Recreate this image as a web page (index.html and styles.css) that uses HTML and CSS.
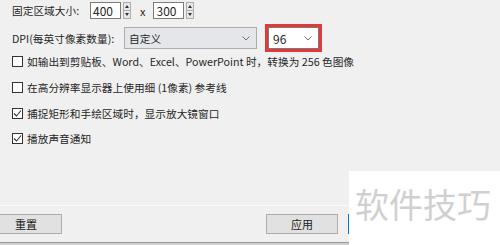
FILE: index.html
```html
<!DOCTYPE html>
<html lang="zh-CN">
<head>
  <meta charset="UTF-8" />
  <title>捕捉设置</title>
  <link rel="stylesheet" href="styles.css">
</head>
<body>
  <div class="panel">
    <div class="row size-row">
      <span class="label">固定区域大小:</span>
      <span class="num-input">400</span>
      <span class="spin"><span class="up"></span><span class="down"></span></span>
      <span class="times">x</span>
      <span class="num-input">300</span>
      <span class="spin"><span class="up"></span><span class="down"></span></span>
    </div>

    <div class="row dpi-row">
      <span class="label dpi-label">DPI(每英寸像素数量):</span>
      <div class="combo combo-mode">
        <span>自定义</span>
        <svg class="chev" width="8" height="5" viewBox="0 0 8 5"><polyline points="0.5,0.5 4,4 7.5,0.5" fill="none" stroke="#6d6d6d" stroke-width="1"/></svg>
      </div>
      <div class="mark">
        <div class="combo combo-dpi">
          <span>96</span>
          <svg class="chev" width="8" height="5" viewBox="0 0 8 5"><polyline points="0.5,0.5 4,4 7.5,0.5" fill="none" stroke="#6d6d6d" stroke-width="1"/></svg>
        </div>
      </div>
    </div>

    <label class="row check"><span class="box"></span>如输出到剪贴板、Word、Excel、PowerPoint 时，转换为 256 色图像</label>
    <label class="row check"><span class="box"></span>在高分辨率显示器上使用细 (1像素) 参考线</label>
    <label class="row check"><span class="box on"><svg width="9" height="9" viewBox="0 0 9 9"><polyline points="1,4.5 3.5,7 8,1.5" fill="none" stroke="#333" stroke-width="1.1"/></svg></span>捕捉矩形和手绘区域时，显示放大镜窗口</label>
    <label class="row check"><span class="box on"><svg width="9" height="9" viewBox="0 0 9 9"><polyline points="1,4.5 3.5,7 8,1.5" fill="none" stroke="#333" stroke-width="1.1"/></svg></span>播放声音通知</label>
  </div>

  <div class="footer">
    <div class="buttons">
      <button class="btn btn-reset">重置</button>
      <button class="btn btn-apply">应用</button>
      <button class="btn btn-cancel" aria-label="取消"></button>
    </div>
    <div class="edge"></div>
  </div>

  <div class="watermark">软件技巧</div>
</body>
</html>
```

FILE: styles.css
```css
body { margin: 0; width: 500px; height: 245px; overflow: hidden; position: relative; background: #f0f0f0; color: #262626; font-family: "Noto Sans CJK SC", "Liberation Sans", sans-serif; font-size: 10.7px; }

.panel { height: 205px; padding-left: 12px; box-sizing: border-box; }
.row { display: flex; align-items: center; }

.size-row { padding-top: 2px; height: 17px; }
.label { width: 78px; }
.num-input { width: 27px; height: 15px; border: 1px solid #7a7a7a; background: #fff; font-size: 12px; line-height: 15px; padding-left: 2px; box-sizing: content-box; }
.spin { display: flex; flex-direction: column; margin-left: 2px; width: 8px; height: 17px; border: 1px solid #adadad; background: #e8e8e8; box-sizing: border-box; }
.spin span { flex: 1; display: flex; align-items: center; justify-content: center; }
.spin .up { border-bottom: 1px solid #adadad; }
.spin .up::before { content: ""; border-left: 2px solid transparent; border-right: 2px solid transparent; border-bottom: 3px solid #333; }
.spin .down::before { content: ""; border-left: 2px solid transparent; border-right: 2px solid transparent; border-top: 3px solid #333; }
.times { margin: 0 8px 0 9px; font-size: 11px; }

.dpi-row { margin-top: 5px; margin-bottom: -3px; height: 28px; }
.dpi-label { width: 112px; }
.combo { display: flex; align-items: center; justify-content: space-between; height: 22px; box-sizing: border-box; padding: 0 6px 0 4px; }
.combo-mode { width: 133px; background: #e4e6e9; border: 1px solid #adadad; }
.combo-dpi { width: 51px; background: #fff; border: 1px solid #7a7a7a; font-size: 12px; }
.mark { margin-left: 8px; border: 3px solid #e2393d; }

.check { height: 25.7px; }
.box { width: 11px; height: 11px; border: 1px solid #333; background: #fff; box-sizing: border-box; margin-right: 4px; display: flex; align-items: center; justify-content: center; }
.box.on svg { display: block; }

.footer { height: 40px; border-top: 1px solid #fbfbfb; display: flex; flex-direction: column; }
.buttons { display: flex; padding-top: 8px; height: 28px; }
.btn { height: 20px; width: 72px; border: 1px solid #adadad; background: #e1e1e1; font-family: inherit; font-size: 11px; color: #1a1a1a; padding: 0; }
.btn-reset { margin-left: -10px; }
.btn-apply { margin-left: 204px; }
.btn-cancel { margin-left: 10px; border-color: #0078d7; }
.edge { margin-top: 5px; height: 4px; border-top: 1px solid #999; background: #cfcfcf; }

/* watermark pasted over the corner */
.watermark { position: absolute; left: 349px; top: 171px; right: 0; bottom: 0; background: #fff; color: #d0d0d0; font-size: 34px; line-height: 66px; padding-left: 6px; }
```
